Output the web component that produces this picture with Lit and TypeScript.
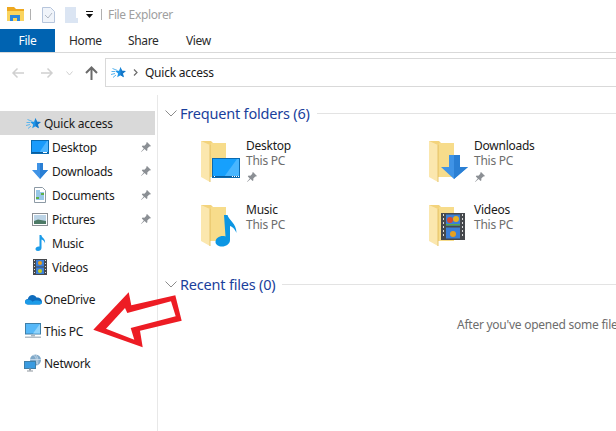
import { LitElement, html, css, svg } from "lit";
import { customElement } from "lit/decorators.js";

const star = svg`<path d="M9.500 1l1.500 3.700 3.800.3-2.900 2.500.9 3.800-3.300-2-3.300 2 .9-3.800L4.200 5l3.800-.3z" fill="#1f95e8"/><path d="M9.500 1l1.500 3.700 3.800.3-2.900 2.500.9 3.800-3.300-2z" fill="#1577c8"/><path d="M1.500 2.500l5 2M.5 5.500h3.500M0 8.500l4-1M2 11.500l3-2.500" stroke="#58b4ee" stroke-width="1"/>`;
const pin = html`<svg class="pin" width="12" height="12" viewBox="0 0 12 12"><path d="M7 1l4 4-1 .6-.7-.2-2 2 .1 1.800-.8.800-2-2L1.200 11 1 10.800l2.800-3.400-2-2 .8-.8 1.800.1 2-2-.2-.7z" fill="#8b8f94"/></svg>`;

const desktopSmall = html`<svg width="18" height="16" viewBox="0 0 18 16"><rect x=".5" y="1.500" width="17" height="13" fill="#1a9bfb" stroke="#0a6ab0"/><path d="M8 14l8-12h1v12z" fill="#4fb6ff"/><path d="M1 13.500h16" stroke="#0a5c9c"/><path d="M12 13.500h4" stroke="#fff"/></svg>`;
const dlSmall = html`<svg width="16" height="16" viewBox="0 0 16 16"><path d="M5 0h6v7h5l-8 9-8-9h5z" fill="#3f93e6"/><path d="M8 0h3v7h5l-8 9z" fill="#2a7fd4"/></svg>`;
const docSmall = html`<svg width="14" height="16" viewBox="0 0 14 16"><path d="M1.500.5h8l3 3v12h-11z" fill="#fff" stroke="#8d9aa5"/><path d="M3 4h4M3 6h8M3 8h8M3 10h8M3 12h8" stroke="#2f8fd0"/><path d="M8 6h3v2H8zM3 10h3v2H3z" fill="#5db04a"/></svg>`;
const picSmall = html`<svg width="16" height="13" viewBox="0 0 16 13"><rect x=".5" y=".5" width="15" height="12" fill="#fff" stroke="#8b8f94"/><rect x="2" y="2" width="12" height="9" fill="#bcd4e6"/><path d="M2 8l4-1.500 8 1.500v3H2z" fill="#4d7a66"/></svg>`;
const noteSmall = html`<svg width="13" height="16" viewBox="0 0 13 16"><path d="M5.500 0h1.800c.4 3 4.700 3.700 3.700 8.500-.3-2-1.700-3.500-3.500-4v8.500c0 2-1.700 3-3.500 3C2.300 16 1.500 15 1.500 14c0-1.700 2-3 4-2.500z" fill="#1b9be8"/></svg>`;
const filmSmall = html`<svg width="14" height="16" viewBox="0 0 14 16"><rect width="14" height="16" fill="#46494d"/><path d="M1 1.500h1M1 4.500h1M1 7.500h1M1 10.500h1M1 13.500h1M12 1.500h1M12 4.500h1M12 7.500h1M12 10.500h1M12 13.500h1" stroke="#ddd"/><rect x="3" y="1" width="8" height="6.500" fill="#3b7fd8"/><rect x="3" y="8.500" width="8" height="6.500" fill="#3b7fd8"/><circle cx="7" cy="4" r="2" fill="#e8a020"/><circle cx="7" cy="12" r="2" fill="#c8d020"/></svg>`;
const starIcon = html`<svg width="15" height="13" viewBox="0 0 15 13">${star}</svg>`;
const cloud = html`<svg width="17" height="12" viewBox="0 0 17 12"><path d="M3 11.500C1 11.500 0 10.200 0 8.800 0 7.200 1.300 6 2.800 6 3.500 3.500 5.300 2 7.500 2c1.800 0 3.200 1 4 2.500C14.800 4.300 17 6.500 17 9c0 1.500-1 2.500-2.500 2.500z" fill="#0f6cbd"/><path d="M3 11.500C1 11.500 0 10.200 0 8.800 0 7.500 1.300 6.500 3 6.500c2 0 3.500 1 4.500 2.200 2-1.500 5-2 9.500.3 0 1.500-1 2.500-2.500 2.500z" fill="#1c9be8"/></svg>`;
const pc = html`<svg width="16" height="16" viewBox="0 0 16 16"><rect x=".5" y=".5" width="15" height="10.500" fill="#56b8f8" stroke="#3f7fa8"/><path d="M8 10.500L14.500 1.500h.5v9z" fill="#8fd3fb"/><rect x="6" y="11.500" width="4" height="2" fill="#a8b8c4"/><rect x="0" y="13.500" width="16" height="1.500" fill="#b4bec6"/></svg>`;
const net = html`<svg width="18" height="18" viewBox="0 0 18 18"><circle cx="11.500" cy="6" r="5.500" fill="#7fa8c8"/><path d="M9 1c3 1 4 4 3 9M6 5.500h11M11.500.5c2 2 3 5 2 10" stroke="#cfe0ee" fill="none" stroke-width=".8"/><rect x=".5" y="7.500" width="11" height="7" fill="#3a9be0" stroke="#3f7fa8"/><rect x="5" y="14.500" width="2" height="2" fill="#8f98a0"/><rect x="3" y="16.500" width="6" height="1" fill="#8f98a0"/></svg>`;

const folder = svg`<path d="M1 2h10l2 2h13v34H9z" fill="#f3d37c"/><path d="M11 4h15v34H11z" fill="#f7dc8b"/><path d="M1 2l9 4v37l-9-5z" fill="#fbe7ae"/><path d="M10 6v37" stroke="#e6c56c"/>`;
const bigIcons: Record<string, unknown> = {
  desktop: html`<svg class="big" viewBox="0 0 44 44">${folder}<rect x="12.500" y="19.500" width="27" height="19" fill="#16a0fd" stroke="#0a6ab0"/><path d="M24 38l13-18h2v18z" fill="#48b6ff"/><path d="M13 37.500h26" stroke="#0a5c9c"/><path d="M14 37.500h1M32 37.500h7" stroke="#fff" stroke-dasharray="1 1"/></svg>`,
  downloads: html`<svg class="big" viewBox="0 0 44 44">${folder}<path d="M21 16h11v12h8L26 40 13 28h8z" fill="#3f93e6"/><path d="M26 16h6v12h8L26 40z" fill="#2a7fd4"/></svg>`,
  music: html`<svg class="big" viewBox="0 0 44 44">${folder}<path d="M24 12h3.500c1 5 9 8 9 18-1-2.500-3-6-6.500-7v14c0 4-4 6.500-8 6.500-3.500 0-6.500-1.800-6.500-4.500 0-4 5-7 10-5.500z" fill="#0c96e3"/></svg>`,
  videos: html`<svg class="big" viewBox="0 0 44 44">${folder}<rect x="13" y="10" width="24" height="27" fill="#46494d"/><path d="M15 12h1M15 16h1M15 20h1M15 24h1M15 28h1M15 32h1M34 12h1M34 16h1M34 20h1M34 24h1M34 28h1M34 32h1" stroke="#ddd" stroke-width="2"/><rect x="18" y="11.500" width="14" height="11" fill="#3b7fd8"/><rect x="18" y="24.500" width="14" height="11" fill="#3b7fd8"/><circle cx="22" cy="17" r="3" fill="#d84a30"/><circle cx="28" cy="16" r="3" fill="#e8b020"/><circle cx="25" cy="31" r="3" fill="#e8a020"/><path d="M18 21h14v1.500H18z" fill="#5aa84a"/></svg>`,
};

const chevron = html`<svg class="chev" width="12" height="7" viewBox="0 0 12 7"><path d="M.5.500L6 6l5.500-5.500" fill="none" stroke="#8c8c8c"/></svg>`;

@customElement("app-root")
export class AppRoot extends LitElement {
  static styles = css`
    :host { display: block; position: relative; width: 616px; height: 431px; overflow: hidden; background: #fff; font: 12px "Noto Sans", sans-serif; letter-spacing: -0.25px; color: #1a1a1a; }
    .title { height: 29px; display: flex; align-items: center; padding-left: 7px; color: #a0a0a0; }
    .sep { width: 1px; height: 11px; background: #b0b0b0; flex: none; }
    .tabs { height: 23px; display: flex; align-items: stretch; border-bottom: 1px solid #d9d9d9; letter-spacing: -0.35px; }
    .tab { display: flex; align-items: center; color: #2b2b2b; }
    .tab.file { width: 55px; justify-content: center; background: #0063b1; color: #fff; margin-right: 14px; }
    .nav { height: 42px; display: flex; align-items: flex-start; padding-top: 5px; box-sizing: border-box; }
    .navicons { width: 105px; height: 30px; display: flex; align-items: center; flex: none; }
    .addr { flex: 1; height: 29px; box-sizing: border-box; border: 1px solid #d9d9d9; border-right: 0; display: flex; align-items: center; padding-left: 5px; }
    .body { display: flex; height: 336px; }
    .side { width: 157px; flex: none; border-right: 1px solid #e8e8e8; padding-top: 16px; }
    .row { height: 24px; display: flex; align-items: center; width: 155px; position: relative; }
    .row .ic { width: 18px; display: flex; justify-content: center; flex: none; }
    .row.top { padding-left: 24px; box-sizing: border-box; }
    .row.top .ic { margin-right: 2px; }
    .row.sub { padding-left: 31px; box-sizing: border-box; }
    .row.sub .ic { margin-right: 3px; }
    .row.sel { background: #d9d9d9; }
    .row.gap { margin-top: 8px; }
    .pin { position: absolute; right: 3px; top: 6px; }
    .main { flex: 1; min-width: 0; padding-left: 6px; overflow: hidden; }
    .head { display: flex; align-items: center; height: 24px; color: #1a3f9c; font-size: 14.500px; letter-spacing: -0.2px; white-space: nowrap; }
    .head.first { margin-top: 6px; }
    .head.second { margin-top: 18px; }
    .head .chev { margin-right: 3px; margin-left: 1px; flex: none; }
    .head .line { flex: 1; height: 1px; background: #e3e3e3; margin-left: 7px; }
    .grid { display: grid; grid-template-columns: 228px 228px; padding-left: 36px; margin-top: 1px; }
    .tile { height: 64px; display: flex; }
    .big { width: 44px; height: 44px; margin-top: 13px; flex: none; margin-right: 2px; }
    .tile .txt { padding-top: 12px; line-height: 15px; }
    .tile .sub { color: #6d6d6d; }
    .tile .pin { position: static; display: block; margin-top: 3px; }
    .empty { color: #6d6d6d; white-space: nowrap; padding-left: 293px; margin-top: 20px; }
    .arrow { position: absolute; left: 0; top: 0; pointer-events: none; }
    .tdoc { margin: 0 10px 0 11px; }
    .tdoc2 { margin-right: 8px; }
    .tdrop { margin-right: 8px; }
    .ttext { margin-left: 6px; letter-spacing: -0.35px; }
    .n1 { margin-left: 11px; } .n2 { margin-left: 15px; } .n3 { margin-left: 12px; } .n4 { margin-left: 12px; }
    .crumb { margin: 0 7px 0 7px; }
    .home { width: 59px; } .share { width: 58px; }
    .ficon { margin-right: 6px; }
  `;

  render() {
    const side = [
      ["Desktop", desktopSmall, true],
      ["Downloads", dlSmall, true],
      ["Documents", docSmall, true],
      ["Pictures", picSmall, true],
      ["Music", noteSmall, false],
      ["Videos", filmSmall, false],
    ] as const;
    const tiles = [
      ["Desktop", "desktop", true],
      ["Downloads", "downloads", true],
      ["Music", "music", false],
      ["Videos", "videos", false],
    ] as const;
    return html`
      <div class="title">
        <svg class="ficon" width="17" height="16" viewBox="0 0 17 16"><path d="M0 0h7l2 2h8v12H0z" fill="#eea820"/><path d="M0 4h17v10H0z" fill="#fad45f"/><path d="M3 8h10v6h-3v-3H6v3H3z" fill="#2a86dc"/></svg>
        <span class="sep"></span>
        <svg class="tdoc" width="13" height="16" viewBox="0 0 13 16"><path d="M.5.500h8l4 4v11H.500z" fill="#f0f4fa" stroke="#b6c5dc"/><path d="M3 8l3 3 4-5" fill="none" stroke="#b0b8c4"/></svg>
        <svg class="tdoc2" width="13" height="16" viewBox="0 0 13 16"><path d="M0 0h11v11h2v5H0z" fill="#dbe5f3"/></svg>
        <svg class="tdrop" width="7" height="8" viewBox="0 0 7 8"><path d="M0 0h7v1H0zM0 3h7L3.500 7z" fill="#111"/></svg>
        <span class="sep"></span>
        <span class="ttext">File Explorer</span>
      </div>
      <div class="tabs">
        <div class="tab file">File</div>
        <div class="tab home">Home</div>
        <div class="tab share">Share</div>
        <div class="tab">View</div>
      </div>
      <div class="nav">
        <div class="navicons">
          <svg class="n1" width="14" height="12" viewBox="0 0 14 12"><path d="M13 6H2M6.500 1.500L2 6l4.500 4.500" fill="none" stroke="#d0d0d0" stroke-width="1.500"/></svg>
          <svg class="n2" width="14" height="12" viewBox="0 0 14 12"><path d="M1 6h11M7.500 1.500L12 6l-4.500 4.500" fill="none" stroke="#d0d0d0" stroke-width="1.500"/></svg>
          <svg class="n3" width="7" height="5" viewBox="0 0 7 5"><path d="M.5.500L3.500 4l3-3.500" fill="none" stroke="#d0d0d0"/></svg>
          <svg class="n4" width="13" height="14" viewBox="0 0 13 14"><path d="M6.500 14V2M1 7l5.500-5.500L12 7" fill="none" stroke="#6b6b6b" stroke-width="2"/></svg>
        </div>
        <div class="addr">
          ${starIcon}
          <svg class="crumb" width="5" height="7" viewBox="0 0 5 7"><path d="M1 .5L4 3.500 1 6.500" fill="none" stroke="#6b6b6b" stroke-width="1.200"/></svg>
          <span>Quick access</span>
        </div>
      </div>
      <div class="body">
        <div class="side">
          <div class="row top sel"><span class="ic">${starIcon}</span>Quick access</div>
          ${side.map(([n, ic, p]) => html`<div class="row sub"><span class="ic">${ic}</span>${n}${p ? pin : ""}</div>`)}
          <div class="row top gap"><span class="ic">${cloud}</span>OneDrive</div>
          <div class="row top gap"><span class="ic">${pc}</span>This PC</div>
          <div class="row top gap"><span class="ic">${net}</span>Network</div>
        </div>
        <div class="main">
          <div class="head first">${chevron}Frequent folders (6)<span class="line"></span></div>
          <div class="grid">
            ${tiles.map(([n, k, p]) => html`<div class="tile">${bigIcons[k]}<div class="txt"><div>${n}</div><div class="sub">This PC</div>${p ? pin : ""}</div></div>`)}
          </div>
          <div class="head second">${chevron}Recent files (0)<span class="line"></span></div>
          <div class="empty">After you've opened some files, we'll show the most recent ones here.</div>
        </div>
      </div>
      <svg class="arrow" width="616" height="431" viewBox="0 0 616 431"><path fill-rule="evenodd" fill="#ed1c24" d="M93.300 329.700L128.700 292.300 131.300 305.300 175.300 295.300 181.700 320.700 140 330.700 142.700 347.300zM106 328.700L125 308 127.300 313 171 301.300 175.700 316.300 130.700 328 134.300 339.700z"/></svg>
    `;
  }
}
